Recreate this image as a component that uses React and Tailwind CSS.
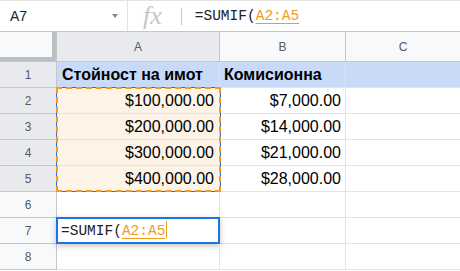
import React from 'react';

const rows = [
  { n: 1, a: 'Стойност на имот', b: 'Комисионна', head: true },
  { n: 2, a: '$100,000.00', b: '$7,000.00' },
  { n: 3, a: '$200,000.00', b: '$14,000.00' },
  { n: 4, a: '$300,000.00', b: '$21,000.00' },
  { n: 5, a: '$400,000.00', b: '$28,000.00' },
  { n: 6 },
  { n: 7, editing: true },
  { n: 8 },
];

const sans = { fontFamily: '"Liberation Sans", Arial, sans-serif' };
const mono = { fontFamily: '"Liberation Mono", "Courier New", monospace' };

function Formula({ caret = false }) {
  return (
    <span className="whitespace-nowrap text-[#202124]" style={mono}>
      =SUMIF(
      <span className="text-[#f09d1b] underline decoration-[#f09d1b] underline-offset-[3px]">A2:A5</span>
      {caret && <span className="ml-px inline-block h-[17px] w-px translate-y-[3px] bg-[#f09d1b]" />}
    </span>
  );
}

function FormulaBar() {
  return (
    <div className="flex h-[32px] items-center border-t border-b border-[#e1e3e1] border-b-[#c4c7c5] bg-white" style={sans}>
      <div className="flex h-full w-[128px] shrink-0 items-center justify-between border-r border-[#e1e3e1] pl-[10px] pr-[9px]">
        <span className="text-[14px] text-[#202124]">A7</span>
        <span className="h-0 w-0 border-x-[3.5px] border-t-[4px] border-x-transparent border-t-[#80868b]" />
      </div>
      <span
        className="ml-[15px] text-[26px] italic leading-none text-[#c4c7c5]"
        style={{ fontFamily: '"Liberation Serif", "Times New Roman", serif' }}
      >
        fx
      </span>
      <span className="ml-[19px] h-[17px] w-px shrink-0 bg-[#c4c7c5]" />
      <span className="ml-[13px] text-[14.5px]">
        <Formula />
      </span>
    </div>
  );
}

function ColHeaders() {
  return (
    <div className="flex h-[30px] border-b border-[#c4c7c5] text-[12px] text-[#575a5e]" style={sans}>
      <div className="relative w-[57px] shrink-0 border-r border-[#c4c7c5] bg-[#f8f9fa]">
        <div className="absolute right-0 top-0 h-[28px] w-[4px] bg-[#bdc1c6]" />
        <div className="absolute bottom-0 left-0 h-[4px] w-full bg-[#bdc1c6]" />
      </div>
      <div className="flex w-[163px] shrink-0 items-center justify-center border-r border-[#c4c7c5] bg-[#e8eaed]">A</div>
      <div className="flex w-[126px] shrink-0 items-center justify-center border-r border-[#c4c7c5] bg-[#f8f9fa]">B</div>
      <div className="flex flex-1 items-center justify-center bg-[#f8f9fa]">C</div>
    </div>
  );
}

function Row({ r }) {
  const hot = r.n <= 5;
  const inRange = r.n >= 2 && r.n <= 5;
  return (
    <div className="flex h-[26px]" style={sans}>
      <div
        className={`flex w-[57px] shrink-0 items-center justify-center border-r border-b border-[#c4c7c5] text-[12px] text-[#575a5e] ${
          hot ? 'bg-[#e8eaed]' : 'bg-[#f8f9fa]'
        }`}
      >
        {r.n}
      </div>
      <div
        className={`relative flex w-[163px] shrink-0 items-center border-r border-b px-[5px] text-[16px] text-black ${
          r.head ? 'border-[#e2e3e3] bg-[#c9daf8] font-bold' : 'justify-end'
        } ${inRange ? 'border-[#ebe2d5] bg-[#fdf4e7]' : 'border-[#e2e3e3]'}`}
      >
        {r.a}
        {r.editing && (
          <div className="absolute -left-px -top-px bottom-[-1px] right-[-1px] flex items-center border-2 border-[#1a73e8] bg-white pl-[3px] text-[14.5px] shadow-[0_2px_6px_rgba(60,64,67,0.3)]">
            <Formula caret />
          </div>
        )}
      </div>
      <div
        className={`flex w-[126px] shrink-0 items-center border-r border-b border-[#e2e3e3] px-[4px] text-[16px] text-black ${
          r.head ? 'bg-[#c9daf8] font-bold' : 'justify-end'
        }`}
      >
        {r.b}
      </div>
      <div className={`flex-1 border-b border-[#e2e3e3] ${r.head ? 'bg-[#c9daf8]' : 'bg-white'}`} />
    </div>
  );
}

export default function App() {
  return (
    <div className="h-[271px] w-[460px] overflow-hidden bg-white">
      <FormulaBar />
      <ColHeaders />
      <div className="relative">
        {rows.map((r) => (
          <Row key={r.n} r={r} />
        ))}
        {/* range frame for A2:A5 while the formula is being typed */}
        <div className="pointer-events-none absolute left-[56px] top-[25px] h-[105px] w-[165px] border border-[#1a73e8]">
          <div className="absolute -inset-px border-2 border-dashed border-[#f29b1f]" />
        </div>
      </div>
    </div>
  );
}
